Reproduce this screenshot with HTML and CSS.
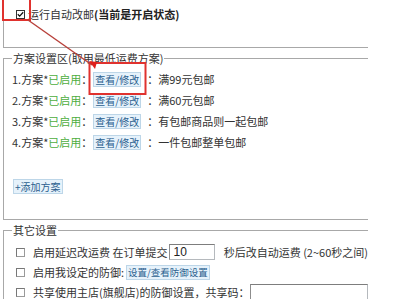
FILE: index.html
```html
<!DOCTYPE html>
<html>
<head>
<meta charset="utf-8">
<link rel="stylesheet" href="styles.css">
</head>
<body>
<div class="page">
  <div class="status-box">
    <div class="status-row"><span class="cb checked"><svg viewBox="0 0 9 9" width="7" height="7"><path d="M1 4.2 L3.4 6.6 L8 1.6" fill="none" stroke="#111" stroke-width="1.6"/></svg></span><span class="status-label">运行自动改邮</span><b>(当前是开启状态)</b></div>
  </div>

  <fieldset class="group plans">
    <legend>方案设置区(取用最低运费方案)</legend>
    <div class="plan-row">1.方案*<span class="on">已启用</span>：<span class="btn">查看/修改</span><span class="desc">：满99元包邮</span></div>
    <div class="plan-row">2.方案*<span class="on">已启用</span>：<span class="btn">查看/修改</span><span class="desc">：满60元包邮</span></div>
    <div class="plan-row">3.方案*<span class="on">已启用</span>：<span class="btn">查看/修改</span><span class="desc">：有包邮商品则一起包邮</span></div>
    <div class="plan-row">4.方案*<span class="on">已启用</span>：<span class="btn">查看/修改</span><span class="desc">：一件包邮整单包邮</span></div>
    <div class="add-row"><span class="btn add">+添加方案</span></div>
  </fieldset>

  <fieldset class="group other">
    <legend>其它设置</legend>
    <div class="opt-row"><span class="cb"></span>启用延迟改运费 在订单提交<span class="field short">10</span><span class="after">秒后改自动运费 (2~60秒之间)</span></div>
    <div class="opt-row"><span class="cb"></span>启用我设定的防御:<span class="btn small">设置/查看防御设置</span></div>
    <div class="opt-row"><span class="cb"></span>共享使用主店(旗舰店)的防御设置，共享码：<span class="field long"></span></div>
  </fieldset>
</div>

<svg class="annot" width="400" height="299" viewBox="0 0 400 299">
  <rect x="3" y="-2" width="27" height="22" fill="none" stroke="#e0322e" stroke-width="2"/>
  <rect x="89.5" y="63" width="56" height="31" fill="none" stroke="#e0322e" stroke-width="2"/>
  <line x1="28" y1="20" x2="92" y2="65" stroke="#b8403a" stroke-width="1.4"/>
  <polygon points="89,61 97,62 95,69" fill="#e0201c"/>
</svg>
</body>
</html>
```

FILE: styles.css
```css
html, body {
  margin: 0;
  padding: 0;
  background: #fff;
}

body {
  position: relative;
  width: 400px;
  height: 299px;
  overflow: hidden;
  font-family: "Noto Sans CJK SC", "Noto Sans", sans-serif;
  font-size: 11px;
  color: #333;
}

.page {
  padding-left: 3px;
  width: 365px;
}

.status-box {
  height: 47px;
  border-left: 1px solid #a8a8a8;
  border-bottom: 1px solid #a8a8a8;
  box-sizing: content-box;
}

.status-row {
  display: flex;
  align-items: center;
  padding: 6px 0 0 12px;
  height: 16px;
  line-height: 16px;
}

.status-row b {
  font-weight: bold;
  color: #222;
}

.cb {
  display: inline-flex;
  align-items: center;
  justify-content: center;
  width: 7px;
  height: 7px;
  border: 1px solid #8a8a8a;
  background: #fff;
  flex: none;
}

.cb.checked {
  border-color: #333;
  margin-right: 3px;
}

.group {
  margin: 2px 0 0;
  padding: 0 0 0 8px;
  border: 1px solid #a8a8a8;
  border-right: none;
  min-width: 0;
}

.group legend {
  padding: 0 1px;
  line-height: 16px;
  color: #333;
}

.plans {
  padding-top: 3px;
  padding-bottom: 26px;
}

.plan-row {
  display: flex;
  align-items: center;
  height: 21px;
  line-height: 21px;
  white-space: nowrap;
}

.on {
  color: #4dae3e;
}

.btn {
  display: inline-block;
  font-size: 10px;
  line-height: 13px;
  padding: 0 1px;
  background: #e6f2fb;
  border: 1px solid #bdd6e8;
  color: #2b5f8e;
  white-space: nowrap;
}

.plan-row .btn {
  margin-left: 1px;
}

.desc {
  margin-left: 6px;
}

.add-row {
  padding-top: 26px;
  height: 14px;
  display: flex;
  align-items: center;
}

.btn.add {
  margin-left: 1px;
}

.other {
  padding-top: 4px;
  padding-bottom: 10px;
}

.opt-row {
  display: flex;
  align-items: center;
  height: 20px;
  padding-left: 4px;
  white-space: nowrap;
}

.opt-row .cb {
  margin-right: 8px;
  border-color: #9a9a9a;
  border-top-color: #777;
  border-left-color: #777;
}

.field {
  display: inline-block;
  height: 14px;
  line-height: 14px;
  border: 1px solid #b5b9bd;
  border-top-color: #7d7d7d;
  border-left-color: #8d8d8d;
  background: #fff;
  padding: 0 3px;
  color: #222;
  font-family: "Liberation Sans", sans-serif;
  font-size: 12px;
}

.field.short {
  width: 38px;
  margin-left: 2px;
}

.after {
  margin-left: 9px;
}

.btn.small {
  font-size: 9.5px;
  margin-left: 2px;
}

.field.long {
  width: 120px;
  margin-left: 1px;
}

.annot {
  position: absolute;
  left: 0;
  top: 0;
  pointer-events: none;
}
```
